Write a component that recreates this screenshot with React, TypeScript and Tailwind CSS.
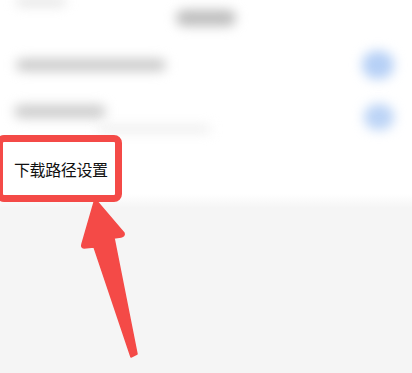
import React from 'react';

const Blur = ({ className }: { className: string }) => (
  <div className={`rounded-full blur-[6px] ${className}`} />
);

export default function App() {
  return (
    <div className="relative w-[412px] h-[373px] overflow-hidden bg-[#f5f5f5] font-['Noto_Sans_CJK_SC',sans-serif]">
      {/* blurred page behind the annotation */}
      <div className="bg-white">
        <div className="h-[40px] flex items-center justify-center relative">
          <Blur className="absolute left-[16px] top-[-2px] w-[50px] h-[8px] bg-[#e2e2e2]" />
          <Blur className="w-[60px] h-[16px] bg-[#bdbdbd] mt-[-4px]" />
        </div>
        <div className="h-[50px] flex items-center justify-between pl-[16px] pr-[18px]">
          <Blur className="w-[150px] h-[12px] bg-[#c8c8c8]" />
          <Blur className="w-[32px] h-[28px] bg-[#b6d0f6]" />
        </div>
        <div className="h-[48px] flex items-center justify-between pl-[14px] pr-[18px]">
          <div className="flex flex-col gap-[8px] pt-[8px]">
            <Blur className="w-[92px] h-[13px] bg-[#cbcbcb]" />
            <Blur className="ml-[84px] w-[112px] h-[6px] bg-[#e8e8e8]" />
          </div>
          <Blur className="w-[30px] h-[26px] bg-[#bcd4f6] mt-[6px]" />
        </div>
        <div className="h-[56px]" />
      </div>
      <div className="h-[14px] bg-gradient-to-b from-white to-[#f5f5f5]" />

      {/* annotation box */}
      <div className="absolute left-[-4px] top-[135px] w-[126px] h-[67px] border-[7px] border-[#f44a47] rounded-[8px] bg-white flex items-center pl-[11px]">
        <span className="text-[16px] leading-none text-[#111] tracking-[-0.4px]">下载路径设置</span>
      </div>

      {/* annotation arrow */}
      <svg className="absolute left-0 top-0" width="412" height="373" viewBox="0 0 412 373">
        <path
          d="M95 199 L124 233 Q125 236 121 237 L114 238 L137 354 L131 357 L94 247 L84 248 Q81 248 82 244 Z"
          fill="#f44a47"
          stroke="#f44a47"
          strokeWidth="1.5"
          strokeLinejoin="round"
        />
      </svg>
    </div>
  );
}
